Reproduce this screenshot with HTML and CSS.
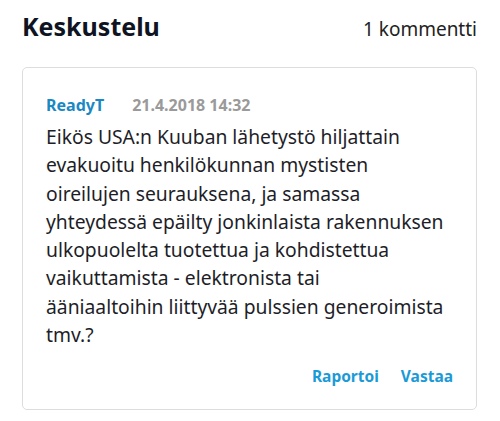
FILE: index.html
```html
<!DOCTYPE html>
<html lang="fi">
<head>
    <meta charset="UTF-8">
    <meta name="viewport" content="width=device-width, initial-scale=1.0">
    <title>Keskustelu</title>
    <link rel="stylesheet" href="styles.css">
</head>
<body>

<div class="discussion">
    <!-- Header -->
    <div class="discussion-header">
        <h2>Keskustelu</h2>
        <span class="count">1 kommentti</span>
    </div>

    <!-- Comment -->
    <div class="comment">
        <div class="comment-meta">
            <span class="author">ReadyT</span>
            <span class="date">21.4.2018 14:32</span>
        </div>
        <p class="comment-text">Eikös USA:n Kuuban lähetystö hiljattain evakuoitu henkilökunnan mystisten oireilujen seurauksena, ja samassa yhteydessä epäilty jonkinlaista rakennuksen ulkopuolelta tuotettua ja kohdistettua vaikuttamista - elektronista tai ääniaaltoihin&nbsp;liittyvää pulssien generoimista tmv.?</p>
        <div class="comment-actions">
            <a href="#">Raportoi</a>
            <a href="#">Vastaa</a>
        </div>
    </div>
</div>

</body>
</html>
```

FILE: styles.css
```css
body {
    font-family: "Noto Sans", sans-serif;
    background: #fff;
    margin: 0;
    padding: 0;
    color: #1e1e28;
}
.discussion {
    padding: 9px 23px 0 22px;
}
.discussion-header {
    display: flex;
    justify-content: space-between;
    align-items: baseline;
    margin-bottom: 24px;
}
h2 {
    margin: 0;
    font-size: 25px;
    font-weight: bold;
    color: #0f1423;
}
.count {
    font-size: 19px;
    color: #222;
}
.comment {
    border: 1px solid #ddd;
    border-radius: 5px;
    padding: 26px 23px 22px 23px;
}
.comment-meta {
    display: flex;
    gap: 28px;
    font-size: 16px;
    font-weight: bold;
}
.author {
    color: #1a88c4;
}
.date {
    color: #9a9a9a;
}
.comment-text {
    max-width: 404px;
    margin: 7px 0 0;
    font-size: 19.3px;
    line-height: 28.3px;
    color: #1e1e28;
}
.comment-actions {
    display: flex;
    justify-content: flex-end;
    gap: 22px;
    margin-top: 16px;
}
.comment-actions a {
    color: #1a9ad6;
    font-weight: bold;
    font-size: 15.5px;
    text-decoration: none;
}
```
